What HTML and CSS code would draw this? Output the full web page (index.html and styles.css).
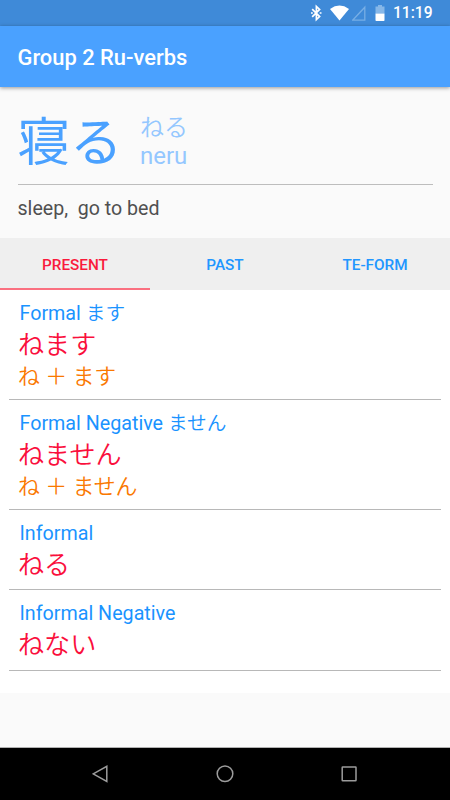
FILE: index.html
```html
<!DOCTYPE html>
<html lang="ja">
<head>
  <meta charset="utf-8">
  <title>Group 2 Ru-verbs</title>
  <link rel="stylesheet" href="styles.css">
</head>
<body>
  <div class="screen">
    <div class="status-bar">
      <svg class="bluetooth" width="12" height="18" viewBox="0 0 12 18" fill="none" stroke="#fff" stroke-width="1.7">
        <path d="M1.2 5.2 L8.6 12.6 L5.4 15.6 V2.4 L8.6 5.4 L1.2 12.8"/>
        <path d="M0 9 h1.8 M8.7 9 h1.8"/>
      </svg>
      <svg class="wifi" width="20" height="18" viewBox="0 0 20 18" fill="#fff">
        <path d="M0 5 Q9.5 -1.8 19 5 L9.5 16.5 Z"/>
      </svg>
      <svg class="signal" width="15" height="18" viewBox="0 0 15 18" fill="none" stroke="#77aee5" stroke-width="1.3">
        <path d="M.6 16.2 L12.8 3.2 V16.2 Z"/>
      </svg>
      <svg class="battery" width="10" height="18" viewBox="0 0 10 18">
        <path fill="#86b7e8" d="M3 1 h4 v1.6 h2.5 v7 h-9 v-7 h2.5 z"/>
        <path fill="#fff" d="M.5 9.6 h9 v6.6 q0 .8 -.8 .8 h-7.4 q-.8 0 -.8 -.8 z"/>
      </svg>
      <span class="clock">11:19</span>
    </div>

    <div class="app-bar">
      <h1>Group 2 Ru-verbs</h1>
    </div>

    <div class="word-header">
      <div class="word-row">
        <div class="word">寝る</div>
        <div class="reading">
          <div class="kana">ねる</div>
          <div class="romaji">neru</div>
        </div>
      </div>
      <p class="meaning">sleep,&nbsp; go to bed</p>
    </div>

    <div class="tabs">
      <div class="tab active">PRESENT</div>
      <div class="tab">PAST</div>
      <div class="tab">TE-FORM</div>
    </div>

    <div class="forms">
      <div class="form-item">
        <div class="form-name">Formal <span class="kana">ます</span></div>
        <div class="form-word">ねます</div>
        <div class="form-rule">ね ＋ ます</div>
      </div>
      <div class="form-item">
        <div class="form-name">Formal Negative <span class="kana">ません</span></div>
        <div class="form-word">ねません</div>
        <div class="form-rule">ね ＋ ません</div>
      </div>
      <div class="form-item short">
        <div class="form-name">Informal</div>
        <div class="form-word">ねる</div>
      </div>
      <div class="form-item short">
        <div class="form-name">Informal Negative</div>
        <div class="form-word">ねない</div>
      </div>
    </div>

    <div class="nav-bar">
      <svg width="18" height="18" viewBox="0 0 18 18"><path d="M14.8 1.3 V16.5 L1.2 8.9 Z"/></svg>
      <svg width="18" height="18" viewBox="0 0 18 18"><circle cx="9" cy="8.8" r="7.8"/></svg>
      <svg width="18" height="18" viewBox="0 0 18 18"><rect x="2.2" y="2" width="13.8" height="13.8" rx=".5"/></svg>
    </div>
  </div>
</body>
</html>
```

FILE: styles.css
```css
body {
  margin: 0;
  background-color: #fafafa;
  font-family: Roboto, "Noto Sans CJK JP", sans-serif;
}

.screen {
  display: flex;
  flex-direction: column;
  width: 450px;
  height: 800px;
  overflow: hidden;
}

.status-bar {
  display: flex;
  align-items: center;
  justify-content: flex-end;
  height: 26px;
  padding-right: 17px;
  background-color: #3f8ad8;
  color: #fff;
}

.wifi {
  margin-left: 7px;
}

.signal {
  margin-left: 2px;
}

.battery {
  margin-left: 8px;
}

.clock {
  width: 40px;
  margin-left: 8px;
  font-size: 15.6px;
  font-weight: 500;
  line-height: 29px;
}

.app-bar {
  height: 61px;
  padding: 0 17.5px;
  background-color: #4aa1ff;
  box-shadow: 0 1px 4px rgba(0, 0, 0, 0.4);
  color: #fff;
}

h1 {
  margin: 0;
  font-size: 21.9px;
  font-weight: 500;
  line-height: 63px;
}

.word-header {
  height: 151px;
  padding: 0 17.5px;
}

.word-row {
  display: flex;
  height: 97px;
  border-bottom: 1px solid #bdbdbd;
}

.word {
  width: 122.5px;
  color: #4aa1ff;
  font-size: 52.5px;
  font-weight: 400;
  line-height: 113px;
}

.reading {
  padding-top: 27px;
  color: #94c7ff;
  font-size: 24px;
  line-height: 28px;
}

.kana {
  font-weight: 350;
}

.meaning {
  margin: 0;
  padding-top: 10px;
  color: #505050;
  font-size: 19.6px;
  line-height: 28px;
}

.tabs {
  display: flex;
  height: 52px;
  background-color: #efefef;
}

.tab {
  flex: 1;
  border-bottom: 2px solid transparent;
  color: #2196ff;
  font-size: 15.3px;
  font-weight: 500;
  line-height: 54px;
  height: 50px;
  text-align: center;
}

.tab.active {
  border-bottom-color: #fa7080;
  color: #fa1a3c;
}

.forms {
  height: 403px;
  background-color: #fff;
}

.form-item {
  box-sizing: border-box;
  height: 110px;
  margin: 0 9px;
  padding: 9px 9px 0;
  border-bottom: 1px solid #b8b8b8;
}

.form-item.short {
  height: 80.3px;
}

.form-name {
  height: 29px;
  padding-left: 1.5px;
  color: #1a93ff;
  font-size: 19.7px;
  line-height: 29px;
}

.form-word {
  height: 33px;
  color: #fa0f3c;
  font-size: 26.1px;
  font-weight: 350;
  line-height: 34px;
}

.form-rule {
  color: #fa7800;
  font-size: 21.9px;
  font-weight: 350;
  line-height: 32px;
}

.nav-bar {
  display: flex;
  align-items: center;
  justify-content: space-between;
  box-sizing: border-box;
  height: 53px;
  margin-top: auto;
  padding: 0 92px;
  border-top: 1px solid #b0b0b0;
  background-color: #000;
}

.nav-bar svg {
  fill: none;
  stroke: #9c9c9c;
  stroke-width: 1.5;
}
```
